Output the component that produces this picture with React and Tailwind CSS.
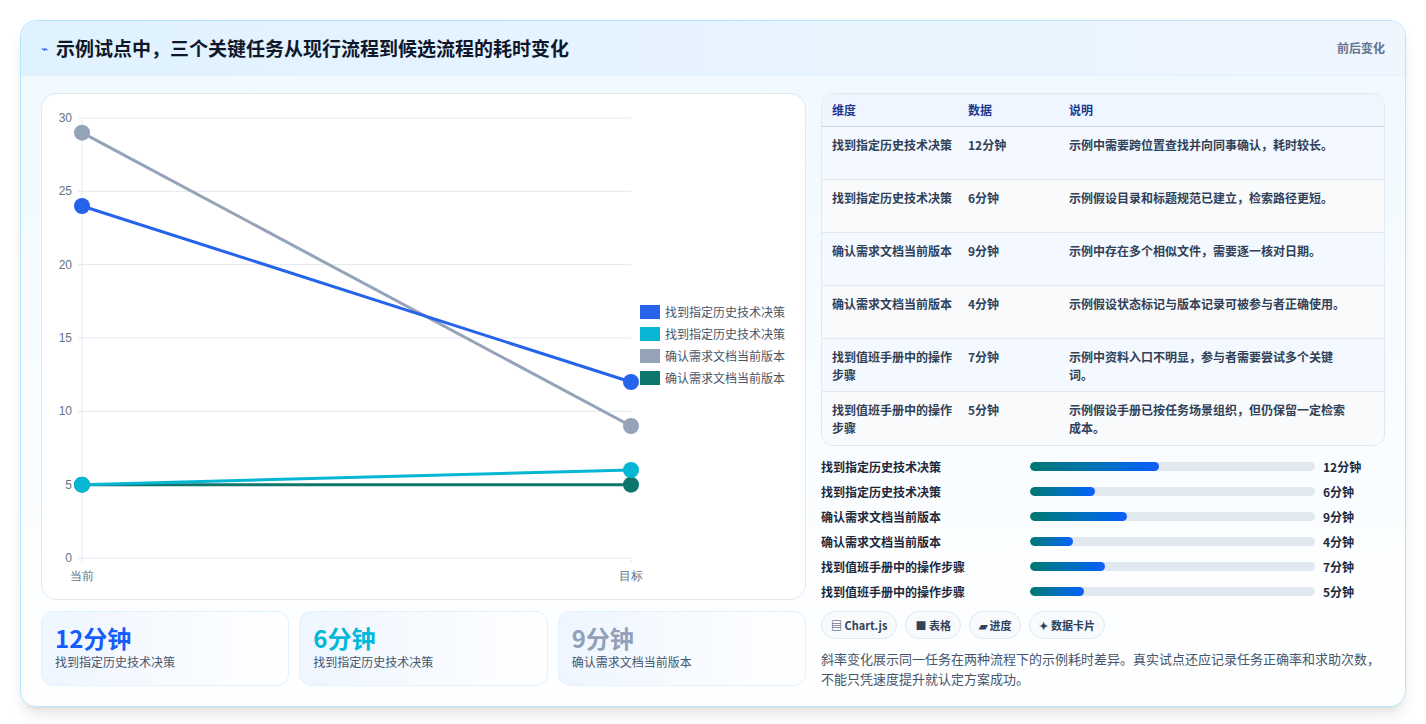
import React from "react";

const F = { fontFamily: '"Noto Sans CJK SC","Noto Sans",sans-serif' };
const rows = [
  ["找到指定历史技术决策", "12分钟", "示例中需要跨位置查找并向同事确认，耗时较长。"],
  ["找到指定历史技术决策", "6分钟", "示例假设目录和标题规范已建立，检索路径更短。"],
  ["确认需求文档当前版本", "9分钟", "示例中存在多个相似文件，需要逐一核对日期。"],
  ["确认需求文档当前版本", "4分钟", "示例假设状态标记与版本记录可被参与者正确使用。"],
  ["找到值班手册中的操作步骤", "7分钟", "示例中资料入口不明显，参与者需要尝试多个关键词。"],
  ["找到值班手册中的操作步骤", "5分钟", "示例假设手册已按任务场景组织，但仍保留一定检索成本。"],
];
const bars = [["找到指定历史技术决策",12],["找到指定历史技术决策",6],["确认需求文档当前版本",9],["确认需求文档当前版本",4],["找到值班手册中的操作步骤",7],["找到值班手册中的操作步骤",5]];

function Chart() {
  const X0 = 40, X1 = 589, Y = v => 464 - v * 14.667;
  const series = [
    ["#2563eb", 24, 12, "找到指定历史技术决策"],
    ["#06b6d4", 5, 6, "找到指定历史技术决策"],
    ["#94a3b8", 29, 9, "确认需求文档当前版本"],
    ["#0f766e", 5, 5, "确认需求文档当前版本"],
  ];
  return (
    <svg width="765" height="506" viewBox="0 0 765 506" style={{ fontFamily: '"Liberation Sans",sans-serif' }}>
      {[0,5,10,15,20,25,30].map(v => (
        <g key={v}>
          <line x1={X0-4} x2={X1} y1={Y(v)} y2={Y(v)} stroke="#e2e8f0" />
          <text x={X0-10} y={Y(v)+4} fontSize="12" fill="#64748b" textAnchor="end">{v}</text>
        </g>
      ))}
      <line x1={X0} x2={X0} y1={Y(30)} y2={Y(0)+4} stroke="#e2e8f0" />
      <line x1={X1} x2={X1} y1={Y(0)} y2={Y(0)+4} stroke="#e2e8f0" />
      <text x={X0} y={486} fontSize="12" fill="#64748b" textAnchor="middle">当前</text>
      <text x={X1} y={486} fontSize="12" fill="#64748b" textAnchor="middle">目标</text>
      {[series[2], series[0], series[3], series[1]].map((s, i) => (
        <g key={i}>
          <line x1={X0} y1={Y(s[1])} x2={X1} y2={Y(s[2])} stroke={s[0]} strokeWidth="3" />
          <circle cx={X0} cy={Y(s[1])} r="8" fill={s[0]} />
          <circle cx={X1} cy={Y(s[2])} r="8" fill={s[0]} />
        </g>
      ))}
      {series.map((s, i) => (
        <g key={"l"+i}>
          <rect x="598" y={211 + i * 22} width="20" height="14" fill={s[0]} />
          <text x="623" y={223 + i * 22} fontSize="12" fill="#475569" style={F}>{s[3]}</text>
        </g>
      ))}
    </svg>
  );
}

export default function App() {
  return (
    <div className="min-h-[724px] bg-white p-5" style={F}>
      <div className="rounded-2xl border border-sky-200 bg-gradient-to-b from-sky-50 to-white shadow-lg overflow-hidden">
        <div className="flex h-[55px] items-center justify-between border-b border-sky-100 bg-gradient-to-r from-sky-100 to-blue-50 px-5">
          <div className="flex items-center gap-2">
            <span className="text-blue-600 text-xs">⌁</span>
            <h1 className="text-[19px] font-bold text-slate-900">示例试点中，三个关键任务从现行流程到候选流程的耗时变化</h1>
          </div>
          <span className="text-xs font-semibold text-slate-500">前后变化</span>
        </div>
        <div className="flex gap-[15px] px-5 pt-[17px] pb-[17px]">
          <div className="w-[765px] flex flex-col gap-[11px]">
            <div className="h-[507px] rounded-2xl border border-slate-200 bg-white overflow-hidden"><Chart /></div>
            <div className="grid grid-cols-3 gap-[10px]">
              {[["12分钟","text-blue-600","找到指定历史技术决策"],["6分钟","text-cyan-500","找到指定历史技术决策"],["9分钟","text-slate-400","确认需求文档当前版本"]].map((c,i)=>(
                <div key={i} className="h-[75px] rounded-xl border border-sky-100 bg-gradient-to-r from-blue-50 to-white px-[13px] pt-[10px]">
                  <div className={`text-[24px] font-bold leading-8 ${c[1]}`}>{c[0]}</div>
                  <div className="text-xs text-slate-600">{c[2]}</div>
                </div>
              ))}
            </div>
          </div>
          <div className="flex-1 flex flex-col">
            <div className="rounded-xl border border-slate-200 bg-slate-50 overflow-hidden">
              <div className="grid grid-cols-[136px_101px_1fr] h-[33px] items-center bg-blue-50 border-b border-slate-300 px-[10px] text-xs font-bold text-blue-900">
                <div>维度</div><div>数据</div><div>说明</div>
              </div>
              {rows.map((r,i)=>(
                <div key={i} className={`grid grid-cols-[136px_101px_1fr] h-[53px] pt-[9px] px-[10px] text-xs font-semibold leading-[18px] text-slate-700 ${i<5?"border-b border-slate-200":""} ${i%2?"bg-slate-50":"bg-sky-50/60"}`}>
                  <div className="pr-4">{r[0]}</div><div>{r[1]}</div><div className="pr-6">{r[2]}</div>
                </div>
              ))}
            </div>
            <div className="mt-[12px] flex flex-col gap-[8px]">
              {bars.map((b,i)=>(
                <div key={i} className="flex items-center h-[17px] text-xs font-semibold text-slate-800">
                  <div className="w-[209px]">{b[0]}</div>
                  <div className="w-[285px] h-[9px] rounded-full bg-slate-200 overflow-hidden">
                    <div className="h-full rounded-full bg-gradient-to-r from-teal-700 to-blue-600" style={{width: `${b[1]/26.5*100}%`}} />
                  </div>
                  <div className="ml-2 font-bold">{b[1]}分钟</div>
                </div>
              ))}
            </div>
            <div className="mt-[11px] flex gap-[8px]">
              {["▤ Chart.js","■ 表格","▰ 进度","✦ 数据卡片"].map(t=>(
                <span key={t} className="h-[28px] flex items-center rounded-full border border-slate-200 bg-slate-50 px-[9px] text-[11px] font-bold text-slate-700">{t}</span>
              ))}
            </div>
            <p className="mt-[10px] text-[13px] leading-[20px] text-slate-600">斜率变化展示同一任务在两种流程下的示例耗时差异。真实试点还应记录任务正确率和求助次数，不能只凭速度提升就认定方案成功。</p>
          </div>
        </div>
      </div>
    </div>
  );
}
